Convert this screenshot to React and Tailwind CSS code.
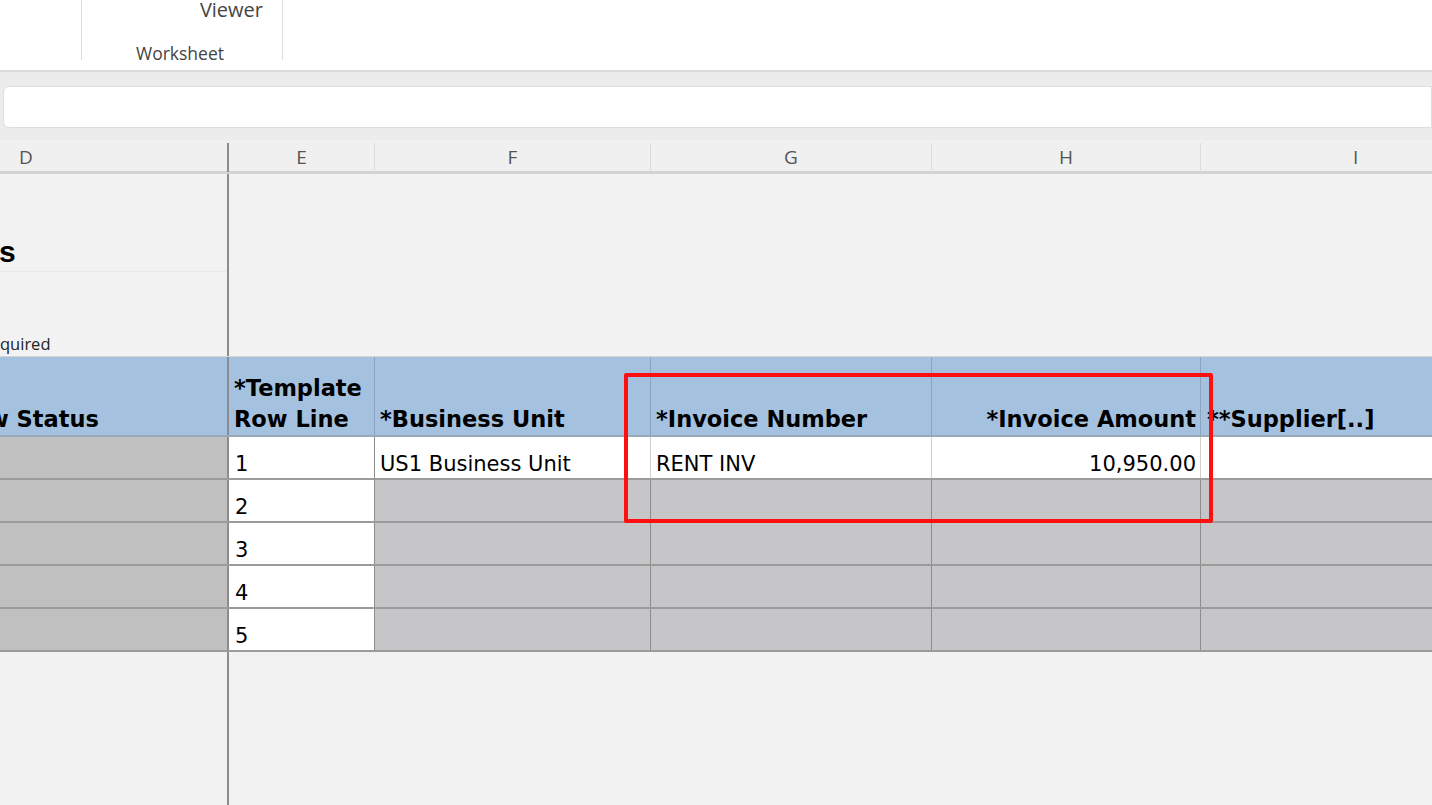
export default function App() {
  const cols = "grid grid-cols-[229px_146px_276px_281px_269px_1fr]";
  const rows = [2, 3, 4, 5];

  return (
    <div className="w-[1432px] h-[805px] overflow-hidden bg-[#f2f2f2] font-['DejaVu_Sans',sans-serif] text-black">
      {/* Ribbon */}
      <div className="h-[70px] bg-white flex font-['Open_Sans',sans-serif] text-[#444]">
        <div className="w-[82px] h-[60px] border-r border-[#dcdcdc]" />
        <div className="w-[201px] h-[60px] border-r border-[#dcdcdc] flex flex-col">
          <div className="text-[20px] leading-none pr-[19px] text-right">Viewer</div>
          <div className="text-[17.5px] leading-none mt-[25px] pl-[54px]">Worksheet</div>
        </div>
      </div>

      {/* Formula bar */}
      <div className="border-t-2 border-[#dadada] bg-[#ececec] h-[70px] pt-[14px] pl-[3px]">
        <div className="h-[42px] bg-white border border-[#dedede] rounded-l-[6px]" />
      </div>

      {/* Sheet */}
      <div className="relative">
        {/* Column letters */}
        <div className={`${cols} h-[34px] pt-[3px] bg-[#f0f0f0] border-b-[3px] border-[#d3d3d3] font-['Open_Sans',sans-serif] text-[19px] text-[#555]`}>
          <div className="border-r-2 border-[#8c8c8c] pl-[19px] flex items-center">D</div>
          <div className="border-r border-[#dcdcdc] flex items-center justify-center">E</div>
          <div className="border-r border-[#dcdcdc] flex items-center justify-center">F</div>
          <div className="border-r border-[#dcdcdc] flex items-center justify-center">G</div>
          <div className="border-r border-[#dcdcdc] flex items-center justify-center">H</div>
          <div className="flex items-center pl-[152px]">I</div>
        </div>

        {/* Title area */}
        <div className="grid grid-cols-[229px_1fr] h-[183px] border-b border-[#d6d6d6]">
          <div className="border-r-2 border-[#8c8c8c] flex flex-col">
            <div className="h-[98px] border-b border-[#e8e8e8] flex items-end pb-[4px]">
              <span className="font-['Liberation_Sans',sans-serif] font-bold text-[30px] leading-none -ml-[1px]">s</span>
            </div>
            <div className="flex-1 flex items-end pb-[4px]">
              <span className="font-['Open_Sans',sans-serif] text-[16.5px] leading-none text-[#222]">quired</span>
            </div>
          </div>
          <div />
        </div>

        {/* Header row */}
        <div className={`${cols} h-[80px] bg-[#a4c2df] border-b-2 border-[#98a9b8] font-bold text-[22.5px] leading-[31px]`}>
          <div className="border-r-2 border-[#8c8c8c] flex items-end -ml-[12px] whitespace-nowrap">w Status</div>
          <div className="border-r border-[#8aa4bf] flex flex-col justify-end pl-[5px] whitespace-nowrap">
            <span>*Template</span>
            <span>Row Line</span>
          </div>
          <div className="border-r border-[#8aa4bf] flex items-end pl-[5px] whitespace-nowrap">*Business Unit</div>
          <div className="border-r border-[#8aa4bf] flex items-end pl-[5px] whitespace-nowrap">*Invoice Number</div>
          <div className="border-r border-[#8aa4bf] flex items-end justify-end pr-[4px] whitespace-nowrap">*Invoice Amount</div>
          <div className="flex items-end pl-[6px] whitespace-nowrap">**Supplier[..]</div>
        </div>

        {/* Row 1 */}
        <div className={`${cols} h-[43px] border-b-2 border-[#9b9b9b] text-[21px] leading-none`}>
          <div className="bg-[#c0c0c0] border-r-2 border-[#8c8c8c]" />
          <div className="bg-white border-r border-[#8c8c8c] flex items-end pb-[3px] pl-[6px]">1</div>
          <div className="bg-white border-r border-[#d0d0d0] flex items-end pb-[3px] pl-[5px] whitespace-nowrap">US1 Business Unit</div>
          <div className="bg-white border-r border-[#d0d0d0] flex items-end pb-[3px] pl-[5px] whitespace-nowrap">RENT INV</div>
          <div className="bg-white border-r border-[#d0d0d0] flex items-end justify-end pb-[3px] pr-[4px]">10,950.00</div>
          <div className="bg-white" />
        </div>

        {/* Rows 2-5 */}
        {rows.map((n) => (
          <div key={n} className={`${cols} h-[43px] border-b-2 border-[#9b9b9b] text-[21px] leading-none`}>
            <div className="bg-[#c0c0c0] border-r-2 border-[#8c8c8c]" />
            <div className="bg-white border-r border-[#8c8c8c] flex items-end pb-[3px] pl-[6px]">{n}</div>
            <div className="bg-[#c6c5c8] border-r border-[#8c8c8c]" />
            <div className="bg-[#c6c5c8] border-r border-[#8c8c8c]" />
            <div className="bg-[#c6c5c8] border-r border-[#8c8c8c]" />
            <div className="bg-[#c6c5c8]" />
          </div>
        ))}

        {/* Empty area below */}
        <div className="grid grid-cols-[229px_1fr] h-[160px]">
          <div className="border-r-2 border-[#8c8c8c]" />
          <div />
        </div>

        {/* Highlight */}
        <div className="absolute left-[624px] top-[233px] w-[589px] h-[150px] border-[4px] border-[#ff1010] rounded-[2px]" />
      </div>
    </div>
  );
}
